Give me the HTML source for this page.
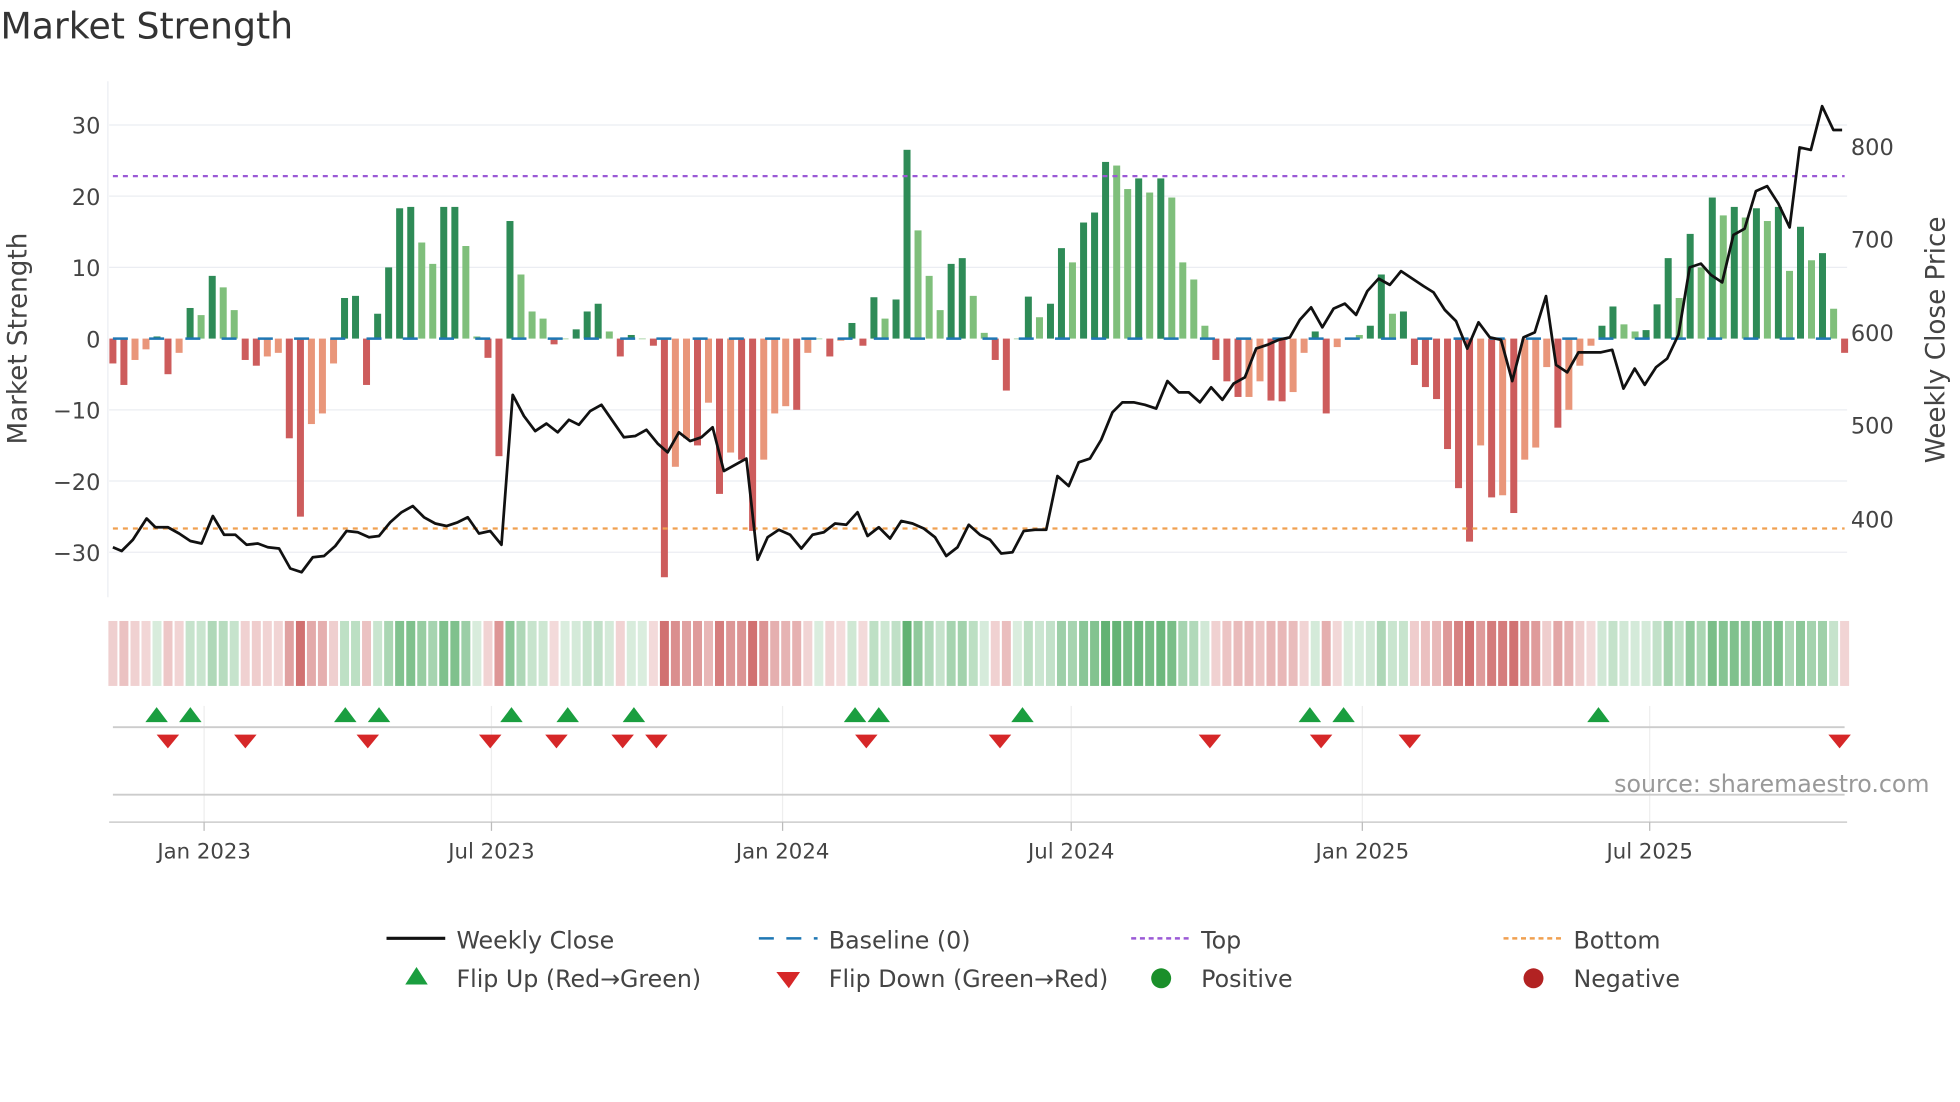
<!DOCTYPE html>
<html><head><meta charset="utf-8"><style>html,body{margin:0;padding:0;background:#fff}svg{display:block}text{font-family:"DejaVu Sans","Liberation Sans",sans-serif}</style></head>
<body>
<svg id="s" width="1960" height="1102" viewBox="0 0 1568 882" xmlns="http://www.w3.org/2000/svg">
<rect width="1568" height="882" fill="#fff"/>
<text x="0" y="31" font-size="29" fill="#333">Market Strength</text>
<g id="grid" stroke="#ebedf2" stroke-width="1">
<line x1="87" x2="1478" y1="100" y2="100"/><line x1="87" x2="1478" y1="157" y2="157"/><line x1="87" x2="1478" y1="214" y2="214"/><line x1="87" x2="1478" y1="328" y2="328"/><line x1="87" x2="1478" y1="385" y2="385"/><line x1="87" x2="1478" y1="442" y2="442"/>
<line x1="86" x2="86" y1="65" y2="478"/>
</g>
<g font-size="18" fill="#444" text-anchor="end">
<text x="80" y="107">30</text><text x="80" y="164">20</text><text x="80" y="221">10</text><text x="80" y="278">0</text><text x="80" y="335">−10</text><text x="80" y="392">−20</text><text x="80" y="449">−30</text>
</g>
<g font-size="18" fill="#444">
<text x="1481" y="124">800</text><text x="1481" y="198">700</text><text x="1481" y="273">600</text><text x="1481" y="347">500</text><text x="1481" y="422">400</text>
</g>
<text transform="translate(21,271) rotate(-90)" font-size="21" fill="#444" text-anchor="middle">Market Strength</text>
<text transform="translate(1556,272) rotate(-90)" font-size="21" fill="#444" text-anchor="middle">Weekly Close Price</text>
<g id="bars"></g>
<line x1="90" x2="1476" y1="271" y2="271" stroke="#1f77b4" stroke-width="2" stroke-dasharray="12,17"/>
<line x1="90" x2="1476" y1="141" y2="141" stroke="#9b59d6" stroke-width="1.8" stroke-dasharray="4,4"/>
<line x1="90" x2="1476" y1="423" y2="423" stroke="#f0a050" stroke-width="1.8" stroke-dasharray="4,4"/>
<polyline id="price" fill="none" stroke="#111" stroke-width="2.2" stroke-linejoin="round"/>
<g id="heat"></g>
<g stroke="#eee" stroke-width="1">
<line x1="163" x2="163" y1="565" y2="658"/><line x1="393" x2="393" y1="565" y2="658"/><line x1="626" x2="626" y1="565" y2="658"/><line x1="857" x2="857" y1="565" y2="658"/><line x1="1090" x2="1090" y1="565" y2="658"/><line x1="1320" x2="1320" y1="565" y2="658"/>
</g>
<line x1="90" x2="1476" y1="582" y2="582" stroke="#ccc" stroke-width="1.5"/>
<line x1="90" x2="1476" y1="636" y2="636" stroke="#ccc" stroke-width="1.5"/>
<line x1="87" x2="1478" y1="658" y2="658" stroke="#ccc" stroke-width="1.2"/>
<g id="marks"></g>
<g stroke="#bbb"><line x1="163" x2="163" y1="658" y2="665"/><line x1="393" x2="393" y1="658" y2="665"/><line x1="626" x2="626" y1="658" y2="665"/><line x1="857" x2="857" y1="658" y2="665"/><line x1="1090" x2="1090" y1="658" y2="665"/><line x1="1320" x2="1320" y1="658" y2="665"/></g>
<g font-size="17" fill="#444" text-anchor="middle">
<text x="163" y="687">Jan 2023</text><text x="393" y="687">Jul 2023</text><text x="626" y="687">Jan 2024</text><text x="857" y="687">Jul 2024</text><text x="1090" y="687">Jan 2025</text><text x="1320" y="687">Jul 2025</text>
</g>
<text x="1544" y="634" font-size="19" fill="#999" text-anchor="end">source: sharemaestro.com</text>
<g font-size="19" fill="#444">
<line x1="309" x2="356" y1="751" y2="751" stroke="#111" stroke-width="2.5"/><text x="365" y="759">Weekly Close</text>
<line x1="607" x2="654" y1="751" y2="751" stroke="#1f77b4" stroke-width="2" stroke-dasharray="12,10"/><text x="663" y="759">Baseline (0)</text>
<line x1="905" x2="952" y1="751" y2="751" stroke="#9b59d6" stroke-width="2" stroke-dasharray="4,3"/><text x="961" y="759">Top</text>
<line x1="1203" x2="1250" y1="751" y2="751" stroke="#f0a050" stroke-width="2" stroke-dasharray="4,3"/><text x="1259" y="759">Bottom</text>
<polygon points="333,774 324,788 342,788" fill="#1a9e3f"/><text x="365" y="790">Flip Up (Red→Green)</text>
<polygon points="621,778 640,778 631,791" fill="#d62728"/><text x="663" y="790">Flip Down (Green→Red)</text>
<circle cx="929" cy="783" r="8" fill="#1a8f2a"/><text x="961" y="790">Positive</text>
<circle cx="1227" cy="783" r="8" fill="#b22222"/><text x="1259" y="790">Negative</text>
</g>
</svg>
<script>
var v=[[-3.5,'r'],[-6.5,'r'],[-3,'s'],[-1.5,'s'],[0.3,'g'],[-5,'r'],[-2,'s'],[4.3,'g'],[3.3,'l'],[8.8,'g'],[7.2,'l'],[4,'l'],[-3,'r'],[-3.8,'r'],[-2.5,'s'],[-2,'s'],[-14,'r'],[-25,'r'],[-12,'s'],[-10.5,'s'],[-3.5,'s'],[5.7,'g'],[6,'g'],[-6.5,'r'],[3.5,'g'],[10,'g'],[18.3,'g'],[18.5,'g'],[13.5,'l'],[10.5,'l'],[18.5,'g'],[18.5,'g'],[13,'l'],[0.3,'l'],[-2.7,'r'],[-16.5,'r'],[16.5,'g'],[9,'l'],[3.8,'l'],[2.8,'l'],[-0.8,'r'],[0,'l'],[1.3,'g'],[3.8,'g'],[4.9,'g'],[1,'l'],[-2.5,'r'],[0.5,'g'],[0,'l'],[-1,'r'],[-33.5,'r'],[-18,'s'],[-14,'s'],[-15,'r'],[-9,'s'],[-21.8,'r'],[-16,'s'],[-17,'r'],[-27,'r'],[-17,'s'],[-10.5,'s'],[-9.5,'s'],[-10,'r'],[-2,'s'],[0,'l'],[-2.5,'r'],[-0.3,'s'],[2.2,'g'],[-1,'r'],[5.8,'g'],[2.8,'l'],[5.5,'g'],[26.5,'g'],[15.2,'l'],[8.8,'l'],[4,'l'],[10.5,'g'],[11.3,'g'],[6,'l'],[0.8,'l'],[-3,'r'],[-7.3,'r'],[0,'l'],[5.9,'g'],[3,'l'],[4.9,'g'],[12.7,'g'],[10.7,'l'],[16.3,'g'],[17.7,'g'],[24.8,'g'],[24.3,'l'],[21,'l'],[22.5,'g'],[20.5,'l'],[22.5,'g'],[19.8,'l'],[10.7,'l'],[8.3,'l'],[1.8,'l'],[-3,'r'],[-6,'r'],[-8.2,'r'],[-8.2,'s'],[-6,'s'],[-8.7,'r'],[-8.8,'r'],[-7.5,'s'],[-2,'s'],[1,'g'],[-10.5,'r'],[-1.2,'s'],[0,'l'],[0.5,'l'],[1.8,'g'],[9,'g'],[3.5,'l'],[3.8,'g'],[-3.7,'r'],[-6.8,'r'],[-8.5,'r'],[-15.5,'r'],[-21,'r'],[-28.5,'r'],[-15,'s'],[-22.3,'r'],[-22,'s'],[-24.5,'r'],[-17,'s'],[-15.3,'s'],[-4,'s'],[-12.5,'r'],[-10,'s'],[-3.8,'s'],[-1,'s'],[1.8,'g'],[4.5,'g'],[2,'l'],[1,'l'],[1.2,'g'],[4.8,'g'],[11.3,'g'],[5.7,'l'],[14.7,'g'],[10,'l'],[19.8,'g'],[17.3,'l'],[18.5,'g'],[17,'l'],[18.3,'g'],[16.5,'l'],[18.5,'g'],[9.5,'l'],[15.7,'g'],[11,'l'],[12,'g'],[4.2,'l'],[-2,'r']];
var C={g:'#2e8b57',l:'#7fbf7b',r:'#cd5c5c',s:'#e9967a'};
var n=v.length,dx=(1476-90)/(n-1),b='',h='';
for(var i=0;i<n;i++){var x=90+i*dx,val=v[i][0],y0=271,y1=271-val*5.7;
b+='<rect x="'+(x-2.8).toFixed(1)+'" y="'+Math.min(y0,y1).toFixed(1)+'" width="5.6" height="'+Math.max(0.5,Math.abs(y1-y0)).toFixed(1)+'" fill="'+C[v[i][1]]+'"/>';
var a=Math.min(0.85,0.2+Math.abs(val)/38),col=val>=0?'rgba(70,165,90,'+a.toFixed(2)+')':'rgba(195,70,70,'+(a*0.9).toFixed(2)+')';
h+='<rect x="'+(x-3.6).toFixed(1)+'" y="497" width="7.2" height="52" fill="'+col+'"/>';}
document.getElementById('bars').innerHTML=b;document.getElementById('heat').innerHTML=h;
var p=[[90,438],[97,441],[106,432],[117,415],[124,422],[134,422],[143,427],[152,433],[161,435],[170,413],[179,428],[188,428],[197,436],[206,435],[214,438],[223,439],[232,455],[241,458],[250,446],[259,445],[268,437],[277,425],[286,426],[295,430],[303,429],[312,418],[321,410],[330,405],[339,414],[348,419],[357,421],[366,418],[374,414],[383,427],[392,425],[401,436],[410,316],[419,333],[428,345],[437,339],[446,346],[455,336],[463,340],[472,329],[481,324],[490,337],[499,350],[508,349],[517,344],[526,355],[534,362],[543,346],[552,353],[561,350],[570,342],[579,377],[588,372],[597,367],[606,448],[614,430],[623,424],[632,428],[641,439],[650,428],[659,426],[668,419],[677,420],[686,410],[694,429],[703,422],[712,431],[721,417],[730,419],[739,423],[748,430],[757,445],[766,438],[775,420],[784,428],[792,432],[801,443],[810,442],[819,425],[828,424],[837,424],[846,381],[855,389],[863,370],[872,367],[881,352],[890,330],[898,322],[907,322],[916,324],[925,327],[934,305],[943,314],[951,314],[960,322],[969,310],[978,320],[987,307],[996,302],[1005,279],[1014,276],[1023,272],[1032,270],[1040,256],[1049,246],[1058,262],[1067,247],[1076,243],[1085,252],[1094,233],[1103,223],[1112,228],[1121,217],[1130,223],[1139,229],[1147,234],[1156,248],[1165,257],[1174,279],[1183,258],[1192,270],[1201,272],[1210,305],[1219,270],[1228,266],[1237,237],[1245,292],[1254,298],[1263,282],[1272,282],[1281,282],[1290,280],[1299,311],[1308,295],[1316,308],[1325,294],[1334,287],[1343,268],[1352,214],[1361,211],[1369,220],[1378,226],[1387,188],[1396,183],[1405,153],[1414,149],[1423,163],[1432,182],[1440,118],[1449,120],[1458,85],[1467,104],[1474,104]];
document.getElementById('price').setAttribute('points',p.map(function(q){return q.join(',')}).join(' '));
var up=[125,152,276,303,409,454,507,684,703,818,1048,1075,1279],dn=[134,196,294,392,445,498,525,693,800,968,1057,1128,1472],m='';
up.forEach(function(x){m+='<polygon points="'+x+',566 '+(x-9)+',578 '+(x+9)+',578" fill="#1a9e3f"/>';});
dn.forEach(function(x){m+='<polygon points="'+(x-9)+',588 '+(x+9)+',588 '+x+',599" fill="#d62728"/>';});
document.getElementById('marks').innerHTML=m;
</script>
</body></html>
